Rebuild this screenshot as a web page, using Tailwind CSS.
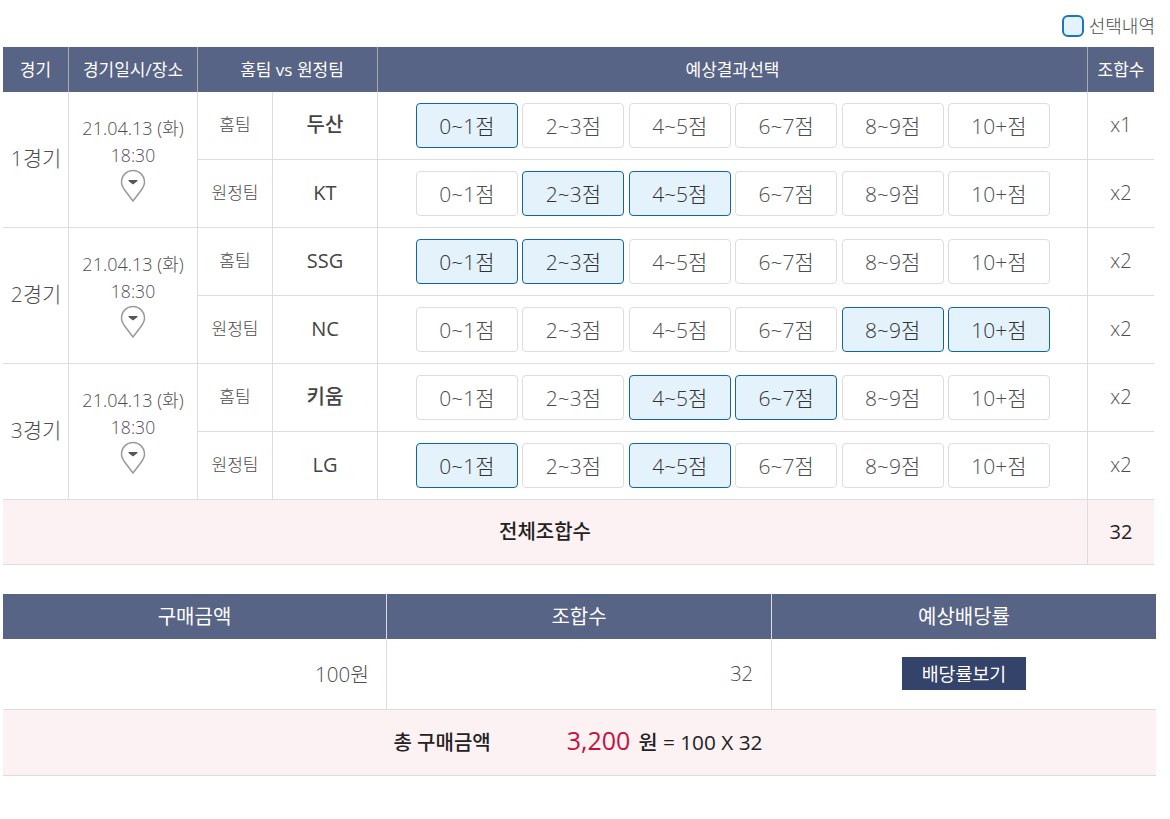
<!DOCTYPE html>
<html lang="ko"><head><meta charset="utf-8"><title>선택내역</title>
<script src="https://cdn.jsdelivr.net/npm/@tailwindcss/browser@4"></script></head>
<body class="bg-white font-['Open_Sans','Noto_Sans_CJK_KR',sans-serif] font-light text-[#4d4d4d]">
<div class="w-[1170px] h-[819px] overflow-hidden pt-[15px]">
 <div class="h-[32px] pr-[15px] flex justify-end items-start gap-[5px]">
  <span class="w-[22px] h-[22px] rounded-[6px] border-2 border-[#1a76b8] bg-[#e4f2fb]"></span>
  <span class="text-[18px] leading-[22px]">선택내역</span>
 </div>
 <div class="ml-[3px] w-[1151px] text-center">
  <div class="grid grid-cols-[66px_129px_180px_710px_66px] h-[45px] bg-[#586485] text-white text-[17px] font-normal leading-[45px]">
   <div class="border-r border-[#aaa]">경기</div><div class="border-r border-[#aaa]">경기일시/장소</div><div class="border-r border-[#aaa] pl-[9px]">홈팀 vs 원정팀</div><div class="border-r border-[#aaa]">예상결과선택</div><div>조합수</div>
  </div>

  <div class="grid grid-cols-[66px_129px_75px_105px_710px_66px] grid-rows-[68px_68px]">
   <div class="row-span-2 border-r border-b border-[#ddd] flex items-center justify-center pb-[2px] pl-[1px] text-[21px]">1경기</div>
   <div class="row-span-2 border-r border-b border-[#ddd] flex flex-col items-center pt-[23px] text-[17.6px] leading-[27px]"><span class="text-[18px]">21.04.13 (화)</span><span class="text-[#5a4a55]">18:30</span><svg width="26" height="34" viewBox="0 0 26 34" fill="none"><path d="M13 32 5 21.500C3 18.800 1.500 16.500 1.500 13A11.500 11.500 0 0 1 24.500 13C24.500 16.500 23 18.800 21 21.500Z" stroke="#999" stroke-width="1.500"/><path d="M8.500 11h9v1l-4.500 3.500-4.500-3.500z" fill="#555"/></svg></div>
   <div class="border-r border-b border-[#ddd] text-[17px] leading-[65px]">홈팀</div>
   <div class="border-r border-b border-[#ddd] text-[20px] font-medium leading-[65px] text-[#444]">두산</div>
   <div class="border-r border-b border-[#ddd] flex gap-[4.4px] pl-[38px] pt-[11px] [&>button]:w-[102px] [&>button]:h-[45px] [&>button]:pt-[2px] [&>button]:rounded-[4px] [&>button]:border [&>button]:text-[21px]">
    <button class="border-[#0f66a8] bg-[#e4f2fb] text-[#333]">0~1점</button><button class="border-[#ddd]">2~3점</button><button class="border-[#ddd]">4~5점</button><button class="border-[#ddd]">6~7점</button><button class="border-[#ddd]">8~9점</button><button class="border-[#ddd]">10+점</button>
   </div>
   <div class="border-b border-[#ddd] text-[20px] leading-[66px]">x1</div>
   <div class="border-r border-b border-[#ddd] text-[17px] leading-[65px]">원정팀</div>
   <div class="border-r border-b border-[#ddd] text-[20px] font-medium leading-[65px] text-[#444]">KT</div>
   <div class="border-r border-b border-[#ddd] flex gap-[4.4px] pl-[38px] pt-[11px] [&>button]:w-[102px] [&>button]:h-[45px] [&>button]:pt-[2px] [&>button]:rounded-[4px] [&>button]:border [&>button]:text-[21px]">
    <button class="border-[#ddd]">0~1점</button><button class="border-[#0f66a8] bg-[#e4f2fb] text-[#333]">2~3점</button><button class="border-[#0f66a8] bg-[#e4f2fb] text-[#333]">4~5점</button><button class="border-[#ddd]">6~7점</button><button class="border-[#ddd]">8~9점</button><button class="border-[#ddd]">10+점</button>
   </div>
   <div class="border-b border-[#ddd] text-[20px] leading-[66px]">x2</div>
  </div>

  <div class="grid grid-cols-[66px_129px_75px_105px_710px_66px] grid-rows-[68px_68px]">
   <div class="row-span-2 border-r border-b border-[#ddd] flex items-center justify-center pb-[2px] pl-[1px] text-[21px]">2경기</div>
   <div class="row-span-2 border-r border-b border-[#ddd] flex flex-col items-center pt-[23px] text-[17.6px] leading-[27px]"><span class="text-[18px]">21.04.13 (화)</span><span class="text-[#5a4a55]">18:30</span><svg width="26" height="34" viewBox="0 0 26 34" fill="none"><path d="M13 32 5 21.500C3 18.800 1.500 16.500 1.500 13A11.500 11.500 0 0 1 24.500 13C24.500 16.500 23 18.800 21 21.500Z" stroke="#999" stroke-width="1.500"/><path d="M8.500 11h9v1l-4.500 3.500-4.500-3.500z" fill="#555"/></svg></div>
   <div class="border-r border-b border-[#ddd] text-[17px] leading-[65px]">홈팀</div>
   <div class="border-r border-b border-[#ddd] text-[20px] font-medium leading-[65px] text-[#444]">SSG</div>
   <div class="border-r border-b border-[#ddd] flex gap-[4.4px] pl-[38px] pt-[11px] [&>button]:w-[102px] [&>button]:h-[45px] [&>button]:pt-[2px] [&>button]:rounded-[4px] [&>button]:border [&>button]:text-[21px]">
    <button class="border-[#0f66a8] bg-[#e4f2fb] text-[#333]">0~1점</button><button class="border-[#0f66a8] bg-[#e4f2fb] text-[#333]">2~3점</button><button class="border-[#ddd]">4~5점</button><button class="border-[#ddd]">6~7점</button><button class="border-[#ddd]">8~9점</button><button class="border-[#ddd]">10+점</button>
   </div>
   <div class="border-b border-[#ddd] text-[20px] leading-[66px]">x2</div>
   <div class="border-r border-b border-[#ddd] text-[17px] leading-[65px]">원정팀</div>
   <div class="border-r border-b border-[#ddd] text-[20px] font-medium leading-[65px] text-[#444]">NC</div>
   <div class="border-r border-b border-[#ddd] flex gap-[4.4px] pl-[38px] pt-[11px] [&>button]:w-[102px] [&>button]:h-[45px] [&>button]:pt-[2px] [&>button]:rounded-[4px] [&>button]:border [&>button]:text-[21px]">
    <button class="border-[#ddd]">0~1점</button><button class="border-[#ddd]">2~3점</button><button class="border-[#ddd]">4~5점</button><button class="border-[#ddd]">6~7점</button><button class="border-[#0f66a8] bg-[#e4f2fb] text-[#333]">8~9점</button><button class="border-[#0f66a8] bg-[#e4f2fb] text-[#333]">10+점</button>
   </div>
   <div class="border-b border-[#ddd] text-[20px] leading-[66px]">x2</div>
  </div>

  <div class="grid grid-cols-[66px_129px_75px_105px_710px_66px] grid-rows-[68px_68px]">
   <div class="row-span-2 border-r border-b border-[#ddd] flex items-center justify-center pb-[2px] pl-[1px] text-[21px]">3경기</div>
   <div class="row-span-2 border-r border-b border-[#ddd] flex flex-col items-center pt-[23px] text-[17.6px] leading-[27px]"><span class="text-[18px]">21.04.13 (화)</span><span class="text-[#5a4a55]">18:30</span><svg width="26" height="34" viewBox="0 0 26 34" fill="none"><path d="M13 32 5 21.500C3 18.800 1.500 16.500 1.500 13A11.500 11.500 0 0 1 24.500 13C24.500 16.500 23 18.800 21 21.500Z" stroke="#999" stroke-width="1.500"/><path d="M8.500 11h9v1l-4.500 3.500-4.500-3.500z" fill="#555"/></svg></div>
   <div class="border-r border-b border-[#ddd] text-[17px] leading-[65px]">홈팀</div>
   <div class="border-r border-b border-[#ddd] text-[20px] font-medium leading-[65px] text-[#444]">키움</div>
   <div class="border-r border-b border-[#ddd] flex gap-[4.4px] pl-[38px] pt-[11px] [&>button]:w-[102px] [&>button]:h-[45px] [&>button]:pt-[2px] [&>button]:rounded-[4px] [&>button]:border [&>button]:text-[21px]">
    <button class="border-[#ddd]">0~1점</button><button class="border-[#ddd]">2~3점</button><button class="border-[#0f66a8] bg-[#e4f2fb] text-[#333]">4~5점</button><button class="border-[#0f66a8] bg-[#e4f2fb] text-[#333]">6~7점</button><button class="border-[#ddd]">8~9점</button><button class="border-[#ddd]">10+점</button>
   </div>
   <div class="border-b border-[#ddd] text-[20px] leading-[66px]">x2</div>
   <div class="border-r border-b border-[#ddd] text-[17px] leading-[65px]">원정팀</div>
   <div class="border-r border-b border-[#ddd] text-[20px] font-medium leading-[65px] text-[#444]">LG</div>
   <div class="border-r border-b border-[#ddd] flex gap-[4.4px] pl-[38px] pt-[11px] [&>button]:w-[102px] [&>button]:h-[45px] [&>button]:pt-[2px] [&>button]:rounded-[4px] [&>button]:border [&>button]:text-[21px]">
    <button class="border-[#0f66a8] bg-[#e4f2fb] text-[#333]">0~1점</button><button class="border-[#ddd]">2~3점</button><button class="border-[#0f66a8] bg-[#e4f2fb] text-[#333]">4~5점</button><button class="border-[#ddd]">6~7점</button><button class="border-[#ddd]">8~9점</button><button class="border-[#ddd]">10+점</button>
   </div>
   <div class="border-b border-[#ddd] text-[20px] leading-[66px]">x2</div>
  </div>

  <div class="grid grid-cols-[1085px_66px] h-[65px] bg-[#fcf1f3] border-b border-[#ddd] text-[20px] font-medium text-[#222] leading-[64px]">
   <div class="border-r border-[#ddd]">전체조합수</div><div>32</div>
  </div>
 </div>

 <div class="ml-[3px] mt-[29px] w-[1153px] text-center">
  <div class="grid grid-cols-[384px_385px_384px] h-[45px] bg-[#586485] text-white text-[20px] font-normal leading-[46px]">
   <div class="border-r border-[#ddd]">구매금액</div><div class="border-r border-[#ddd]">조합수</div><div>예상배당률</div>
  </div>
  <div class="grid grid-cols-[384px_385px_384px] h-[71px] border-b border-[#ddd] text-[20px] leading-[70px]">
   <div class="border-r border-[#ddd] text-right pr-[17px] text-[20.5px]">100원</div>
   <div class="border-r border-[#ddd] text-right pr-[18px]">32</div>
   <div class="flex justify-center items-start pt-[18px]"><button class="w-[124px] h-[33px] bg-[#33436a] text-white text-[18.4px] font-normal leading-[30px]">배당률보기</button></div>
  </div>
  <div class="h-[66px] pr-[3px] bg-[#fcf1f3] border-b border-[#ddd] flex justify-center items-baseline text-[#222] text-[20px] font-medium leading-[60px]">
   <span>총 구매금액</span><span class="ml-[76px] text-[25px] font-normal text-[#c8103c]">3,200</span><span class="ml-[8px] text-[20.8px]">원 = 100 X 32</span>
  </div>
 </div>
</div>
</body></html>
